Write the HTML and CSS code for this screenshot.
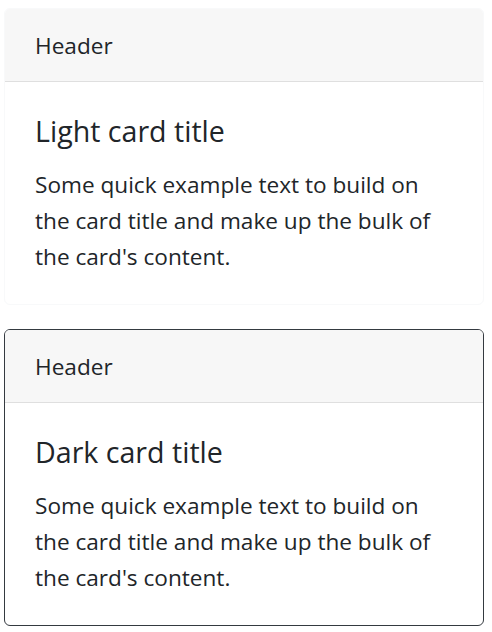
FILE: index.html
```html
<!DOCTYPE html>
<html>
<head>
<meta charset="utf-8">
<link rel="stylesheet" href="styles.css">
</head>
<body>
<div class="page">
  <div class="card card-light">
    <div class="card-header">Header</div>
    <div class="card-body">
      <h5 class="card-title">Light card title</h5>
      <p class="card-text">Some quick example text to build on the card title and make up the bulk of the card's content.</p>
    </div>
  </div>
  <div class="card card-dark">
    <div class="card-header">Header</div>
    <div class="card-body">
      <h5 class="card-title">Dark card title</h5>
      <p class="card-text">Some quick example text to build on the card title and make up the bulk of the card's content.</p>
    </div>
  </div>
</div>
</body>
</html>
```
FILE: styles.css
```css
html, body {
  margin: 0;
  padding: 0;
  background: #fff;
}
body {
  font-family: "Open Sans", "Noto Sans", sans-serif;
  color: #212529;
  font-size: 22.6px;
  line-height: 36px;
}
.page {
  padding: 8px 8px 8px 4px;
  display: flex;
  flex-direction: column;
  gap: 24px;
}
.card {
  display: flex;
  flex-direction: column;
  border: 1px solid rgba(0,0,0,.125);
  border-radius: 6px;
  background: #fff;
  overflow: hidden;
}
.card-light { border-color: #f8f9fa; }
.card-dark { border-color: #343a40; }
.card-header {
  background: #f7f7f7;
  padding: 19px 30px 17px;
  border-bottom: 1px solid #dfdfdf;
  height: 36px;
}
.card-body {
  padding: 31px 30px 29px;
}
.card-title {
  margin: 0 0 18px;
  font-size: 28.6px;
  line-height: 36px;
  font-weight: 400;
}
.card-text {
  margin: 0;
}
```
